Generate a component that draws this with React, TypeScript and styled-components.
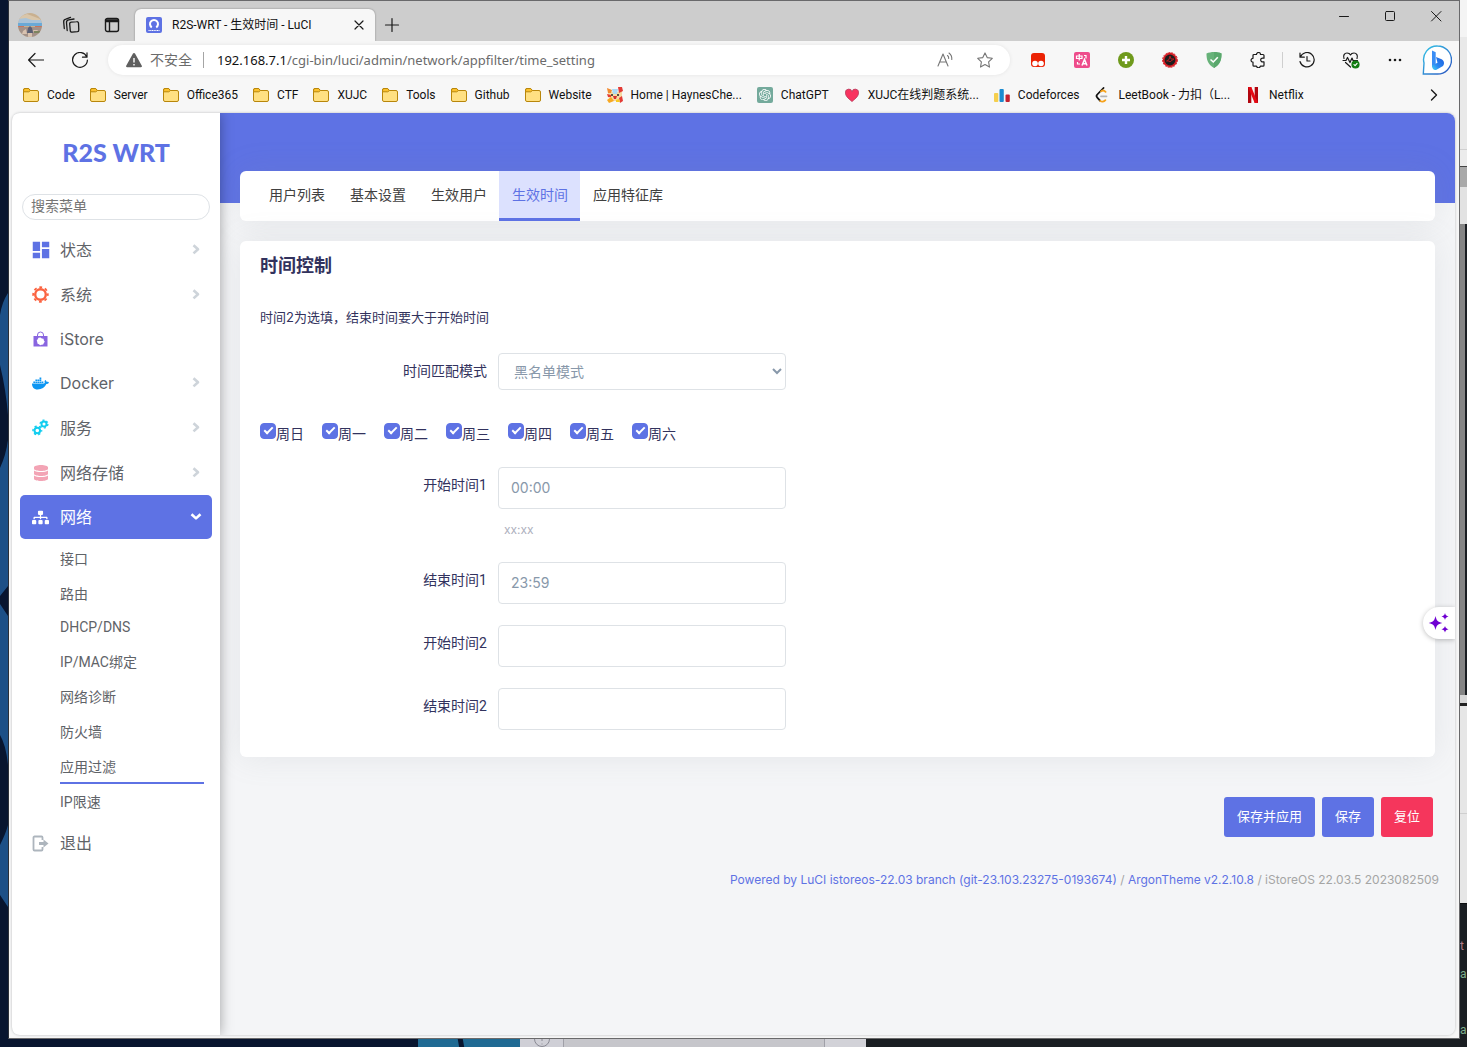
import React, { useState } from "react";
import styled, { createGlobalStyle, css } from "styled-components";
import { FaDatabase, FaDocker, FaSitemap } from "react-icons/fa";
import { MdDashboard } from "react-icons/md";
import { SiOpenai } from "react-icons/si";

const primary = "#5e72e4";
const uiFont = `"Noto Sans", "Open Sans", "Noto Sans CJK SC", sans-serif`;
const compactFont = `Roboto, "Noto Sans CJK SC", sans-serif`;
const pageFont = `Inter, "Noto Sans CJK SC", sans-serif`;

const GlobalStyle = createGlobalStyle`
  *, *::before, *::after { box-sizing: border-box; }
  body { margin: 0; font-family: ${pageFont}; }
  button { font: inherit; border: 0; background: none; padding: 0; cursor: pointer; }
  a { color: inherit; text-decoration: none; }
  ul { list-style: none; margin: 0; padding: 0; }
`;

/* ---------- desktop behind the window ---------- */

const Desktop = styled.div`
  display: grid;
  grid-template-columns: 8px minmax(0, 1fr) 7px;
  grid-template-rows: minmax(0, 1fr) 8px;
  height: 100vh;
  background: #08152f;
  overflow: hidden;
`;

const Wallpaper = styled.svg`
  width: 8px;
  height: 100%;
`;

const RightEdge = styled.div`
  display: flex;
  flex-direction: column;
  grid-row: 1 / 3;
  grid-column: 3;
  overflow: hidden;
  background: #e6e6e6;
`;

const EdgeBlock = styled.div<{ $h: number; $c: string; $line?: string }>`
  flex: 0 0 ${(p) => p.$h}px;
  background: ${(p) => p.$c};
  border-bottom: ${(p) => (p.$line ? `1px solid ${p.$line}` : "0")};
`;

const Terminal = styled.div`
  flex: 1;
  padding-top: 28px;
  background: #1a1e22;
  font: 12px/28px ${compactFont};
  border-top: 1px solid #0c0e10;
`;

const TermLine = styled.div<{ $c: string }>`
  color: ${(p) => p.$c};
  height: 28px;
`;

const BottomEdge = styled.div`
  grid-row: 2;
  grid-column: 1 / 3;
  display: flex;
  overflow: hidden;
`;

const Strip = styled.div<{ $w?: number; $c: string }>`
  flex: ${(p) => (p.$w ? `0 0 ${p.$w}px` : "1")};
  height: 8px;
  background: ${(p) => p.$c};
  svg { display: block; }
`;

/* ---------- browser window ---------- */

const BrowserWindow = styled.div`
  grid-row: 1;
  grid-column: 2;
  display: flex;
  flex-direction: column;
  min-height: 0;
  background: #f7f7f7;
  border: 1px solid #69696b;
  border-left-color: #2c3038;
`;

const TitleBar = styled.div`
  display: flex;
  height: 40px;
  background: #cdcdcd;
  font-family: ${uiFont};
`;

const TitleLeft = styled.div`
  display: flex;
  align-items: center;
  width: 126px;
  padding: 8px 0 0 8px;
`;

const TitleIcon = styled.button`
  display: grid;
  place-items: center;
  width: 41px;
  height: 32px;
  &:first-child { width: 26px; margin-right: 7px; }
`;

const BrowserTab = styled.div`
  display: flex;
  align-items: center;
  width: 240px;
  margin-top: 8px;
  padding: 0 8px 0 11px;
  border-radius: 6px 6px 0 0;
  background: #f7f7f7;
  box-shadow: 0 0 2px rgba(0, 0, 0, 0.4);
  clip-path: inset(-3px -3px 0 -3px);
  font: 12px/16px ${compactFont};
  color: #111;
  svg { flex: none; }
`;

const TabTitle = styled.span`
  flex: 1;
  margin-left: 10px;
  white-space: nowrap;
`;

const TabButton = styled.button`
  display: grid;
  place-items: center;
  width: 16px;
  height: 32px;
`;

const NewTab = styled(TabButton)`
  width: 34px;
  margin-top: 8px;
`;

const WindowButtons = styled.div`
  display: flex;
  margin-left: auto;
`;

const WindowButton = styled.button`
  display: grid;
  place-items: center;
  width: 46px;
  height: 30px;
`;

const Toolbar = styled.div`
  display: flex;
  align-items: center;
  height: 38px;
  padding: 0 2px 0 5px;
`;

const ToolButton = styled.button<{ $w?: number }>`
  display: grid;
  place-items: center;
  flex: 0 0 ${(p) => p.$w ?? 44}px;
  height: 34px;
`;

const Address = styled.div`
  display: flex;
  align-items: center;
  flex: 1;
  height: 30px;
  margin: 0 6px;
  padding-left: 18px;
  padding-right: 5px;
  border-radius: 15px;
  background: #fff;
  box-shadow: 0 0 4px rgba(0, 0, 0, 0.08);
  color: #6b6b6b;
  font: 13px/20px ${uiFont};
`;

const Insecure = styled.span`
  margin-left: 8px;
  padding-right: 11px;
  font-size: 14px;
  line-height: 16px;
  border-right: 1px solid #a5a5a5;
`;

const Url = styled.span`
  flex: 1;
  margin-left: 13px;
  white-space: nowrap;
  b { font-weight: 400; color: #111; }
`;

const ToolDivider = styled.span`
  width: 1px;
  height: 16px;
  margin: 0 2px;
  background: #cfcfcf;
`;

const Bookmarks = styled.nav`
  display: flex;
  align-items: center;
  height: 34px;
  flex: none;
  padding: 0 17px 2px 14px;
  color: #111;
  font: 12px/16px ${compactFont};
`;

const Bookmark = styled.a`
  display: flex;
  align-items: center;
  gap: 8px;
  margin-right: 15px;
  white-space: nowrap;
  svg { flex: none; }
`;

const MoreBookmarks = styled.button`
  display: grid;
  place-items: center;
  width: 16px;
  height: 24px;
  margin-left: auto;
`;

/* ---------- router page ---------- */

const Viewport = styled.div`
  position: relative;
  display: flex;
  flex: 1;
  min-height: 0;
  margin: 0 4px 3px 3px;
  border-radius: 8px;
  overflow: hidden;
  background: #f4f5f7;
  box-shadow: 0 0 2px 1px #d9dadb;
`;

const Sidebar = styled.aside`
  position: relative;
  flex: 0 0 208px;
  padding: 0 8px;
  background: #fff;
  box-shadow: 0 0 12px rgba(0, 0, 0, 0.35);
`;

const Brand = styled.a`
  display: block;
  padding-top: 21px;
  height: 81px;
  text-align: center;
  color: ${primary};
  font: 900 25px/36px Lato, sans-serif;
`;

const Search = styled.input`
  display: block;
  width: calc(100% - 4px);
  height: 26px;
  margin: 0 2px 7px;
  padding: 0 8px 2px;
  border: 1px solid #dee2e6;
  border-radius: 13px;
  font: 14px/20px ${compactFont};
  outline: 0;
  &::placeholder { color: #757575; }
`;

const MenuLink = styled.a<{ $active?: boolean; $short?: boolean }>`
  display: flex;
  align-items: center;
  height: ${(p) => (p.$short || p.$active ? 44 : 45)}px;
  padding: 0 8px 0 12px;
  border-radius: 5px;
  color: #5f6368;
  font-size: 16px;
  line-height: 24px;
  ${(p) => p.$active && css`background: ${primary}; color: #fff;`}
`;

const MenuIcon = styled.span<{ $c: string }>`
  display: flex;
  align-items: center;
  justify-content: center;
  width: 17px;
  height: 17px;
  margin-right: 11px;
  color: ${(p) => p.$c};
  svg { flex: none; }
`;

const MenuLabel = styled.span`
  flex: 1;
`;

const SubMenu = styled.ul`
  padding: 2px 8px 2px 40px;
`;

const SubLink = styled.a<{ $active?: boolean; $short?: boolean }>`
  display: block;
  height: ${(p) => (p.$short ? 33 : 35)}px;
  border-bottom: 2px solid ${(p) => (p.$active ? primary : "transparent")};
  color: #5f6368;
  font: 14px/36px ${compactFont};
  ${(p) => p.$short && css`line-height: 33px;`}
`;

const Main = styled.main`
  flex: 1;
  min-width: 0;
  padding: 58px 20px 0;
  background: linear-gradient(${primary} 90px, #f4f5f7 90px);
  color: #32325d;
`;

const TabBar = styled.nav`
  display: flex;
  height: 50px;
  padding: 0 16px;
  border-radius: 6px;
  background: #fff;
  box-shadow: 0 0 32px rgba(136, 140, 150, 0.14);
`;

const PageTab = styled.a<{ $active?: boolean }>`
  padding: 0 12px 0 13px;
  border-bottom: 3px solid ${(p) => (p.$active ? primary : "transparent")};
  background: ${(p) => (p.$active ? "#dce1fe" : "none")};
  color: ${(p) => (p.$active ? primary : "#404040")};
  font-size: 14px;
  line-height: 48px;
`;

const Card = styled.section`
  margin-top: 20px;
  padding: 11px 20px 27px;
  border-radius: 6px;
  background: #fff;
  box-shadow: 0 0 32px rgba(136, 140, 150, 0.14);
`;

const CardTitle = styled.h3`
  margin: 0 0 27px;
  font-size: 18px;
  line-height: 28px;
  font-weight: 700;
`;

const Lead = styled.p`
  margin: 0 0 26px;
  font-size: 13px;
  line-height: 20px;
`;

const Row = styled.div`
  display: flex;
  margin-bottom: 21px;
  &:last-child { margin-bottom: 0; }
`;

const RowLabel = styled.label`
  flex: 0 0 227px;
  margin-right: 11px;
  text-align: right;
  font: 14px/36px ${compactFont};
`;

const Field = styled.div`
  width: 288px;
`;

const control = css`
  display: block;
  width: 100%;
  border: 1px solid #dee2e6;
  border-radius: 4px;
  background: #fff;
  color: #8898aa;
  font-family: ${pageFont};
  outline: 0;
`;

const Select = styled.select`
  ${control}
  height: 37px;
  padding: 0 0 1px 11px;
  font-size: 14px;
`;

const TextInput = styled.input`
  ${control}
  height: 42px;
  padding: 0 12px 2px;
  font-size: 14px;
`;

const Hint = styled.div`
  margin-top: 9px;
  padding-left: 6px;
  color: #adb0bd;
  font-size: 12px;
  line-height: 23px;
`;

const Days = styled.div`
  display: flex;
  gap: 18px;
  margin: 32px 0 24px;
`;

const Day = styled.label`
  display: flex;
  font-size: 14px;
  line-height: 20px;
  height: 20px;
  margin-top: 1px;
  span { padding-top: 1px; }
`;

const DayBox = styled.input`
  appearance: none;
  display: grid;
  place-items: center;
  width: 16px;
  height: 16px;
  margin: 0;
  border: 1px solid ${primary};
  border-radius: 4px;
  background: #fff;
  &:checked { background: ${primary}; }
  &:checked::after {
    content: "";
    width: 9px;
    height: 5px;
    margin-bottom: 3px;
    border: solid #fff;
    border-width: 0 0 2px 2px;
    transform: rotate(-45deg);
  }
`;

const Actions = styled.div`
  display: flex;
  justify-content: flex-end;
  gap: 7px;
  padding: 40px 2px 0 0;
`;

const ActionButton = styled.button<{ $danger?: boolean }>`
  height: 40px;
  padding: 0 13px 2px;
  border-radius: 3px;
  background: ${(p) => (p.$danger ? "#f5365c" : primary)};
  color: #fff;
  font-size: 13px;
  line-height: 20px;
`;

const Footer = styled.footer`
  margin: 33px -4px 0 0;
  text-align: right;
  color: #a5a5a5;
  font-size: 12px;
  line-height: 20px;
  a { color: ${primary}; }
`;

const Assistant = styled.button`
  position: absolute;
  right: 0;
  top: 494px;
  display: grid;
  place-items: center;
  width: 32px;
  height: 32px;
  border-radius: 16px 0 0 16px;
  background: #fff;
  box-shadow: 0 1px 5px rgba(0, 0, 0, 0.25);
`;

/* ---------- icons ---------- */

type Kids = { children: React.ReactNode; s?: number; w?: number; c?: string };
const Line = ({ children, s = 16, w = 1.2, c = "#1a1a1a" }: Kids) => (
  <svg width={s} height={s} viewBox={`0 0 ${s} ${s}`} fill="none" stroke={c} strokeWidth={w} strokeLinecap="round" strokeLinejoin="round">
    {children}
  </svg>
);

const Folder = () => (
  <svg width="16" height="16" viewBox="0 0 16 16" stroke="#b8860b" strokeLinejoin="round">
    <path d="M.5 3A1.5 1.5 0 0 1 2 1.500h3.600L7.500 3.500H14A1.500 1.500 0 0 1 15.500 5v8A1.500 1.500 0 0 1 14 14.500H2A1.500 1.500 0 0 1 .5 13z" fill="#ffe082" />
    <path d="M.7 4.800h5L7.500 3.500 5.600 1.500H2A1.500 1.500 0 0 0 .5 3z" fill="#fbc02d" />
  </svg>
);

const Avatar = () => (
  <svg width="24" height="24" viewBox="0 0 24 24">
    <clipPath id="face"><circle cx="12" cy="12" r="12" /></clipPath>
    <g clipPath="url(#face)">
      <path fill="#c9b08f" d="M0 0h24v24H0z" />
      <path fill="#d9c6aa" d="M3 3l6-2 8 3 5 2v2H0V5z" />
      <path fill="#a9c3d8" d="M0 6l8-1 6 2h10v5H0z" />
      <path fill="#6aa9d6" d="M0 10h24v3H0z" />
      <path fill="#c9745c" d="M0 13h6v1H0zM17 13h7v1h-7z" />
      <path fill="#a39188" d="M0 14h24v10H0z" />
      <path fill="#5a5f74" d="M10 15l2-2 2 2 1 5H9z" />
      <path fill="#d8c2b0" d="M5 18l3-2 1 5H4zM15 17h5l-2 3h-2zM10 20h4v4h-4z" />
      <path fill="#7d8560" d="M16 18h6v2h-6z" />
    </g>
  </svg>
);

const OpenWrt = () => (
  <svg width="16" height="16" viewBox="0 0 16 16">
    <rect width="16" height="16" rx="2" fill={primary} />
    <path d="M5.800 10.300a4 4 0 1 1 4.400 0" fill="none" stroke="#fff" strokeWidth="2" />
    <path d="M2.500 13.500h11" stroke="#fff" strokeWidth="1.200" strokeDasharray="1.200 .5" />
  </svg>
);

const Haynes = () => (
  <svg width="16" height="16" viewBox="0 0 16 16">
    <path d="M1 3l4 2h6l4-2v7l-4 4H5l-4-4z" fill="#f6d9a2" />
    <path d="M11 0l4-0 1 4-4 2zM0 7l4 1v2H1zM12 11l3-2 1 5-3 2z" fill="#e33b35" />
    <path d="M0 1l5 2-1 3-3 0z" fill="#f28b30" />
    <path d="M5 2h6l-1 5H6z" fill="#a9d8f4" />
    <path d="M0 13l4-3 3 4-5 2z" fill="#f7a823" />
    <path d="M6 9h4l-1 3H7z" fill="#d32f2f" />
    <circle cx="5" cy="8" r="1" fill="#222" /><circle cx="11" cy="8" r="1" fill="#222" />
    <path d="M9 13l3-1 1 3H9z" fill="#f7c823" />
  </svg>
);

const ChatGpt = () => (
  <svg width="16" height="16" viewBox="0 0 16 16">
    <rect width="16" height="16" rx="2" fill="#74aa9c" />
    <SiOpenai x="2" y="2" size={12} color="#fff" />
  </svg>
);

const Heart = () => (
  <svg width="16" height="16" viewBox="0 0 16 16">
    <path d="M8 14.500C3.500 11 1.500 8.600 1.500 6a3.300 3.300 0 0 1 6.500-1.200A3.300 3.300 0 0 1 14.500 6c0 2.600-2 5-6.500 8.500z" fill="#f8335f" stroke="#b8385a" strokeWidth=".8" />
  </svg>
);

const Codeforces = () => (
  <svg width="16" height="16" viewBox="0 0 16 16">
    <rect y="6" width="4.300" height="9" rx="1" fill="#f5cf4e" />
    <rect x="5.500" y="2" width="4.300" height="13" rx="1" fill="#1b8bd0" />
    <rect x="11.500" y="7.500" width="4.300" height="7.500" rx="1" fill="#c32230" />
  </svg>
);

const LeetCode = () => (
  <svg width="16" height="16" viewBox="0 0 16 16" fill="none" strokeWidth="1.800" strokeLinecap="round">
    <path d="M9.500 1L3.300 7.500a2.300 2.300 0 0 0 0 3.200l2.700 3" stroke="#111" />
    <path d="M7 4.400c1.500-1.300 3.200-1 4.600.5M6.200 13.800c1.500 1.400 3.600 1.200 5.200-.6" stroke="#f6a21b" />
    <path d="M7 9.300h5.500" stroke="#b3b3b3" />
  </svg>
);

const Netflix = () => (
  <svg width="16" height="16" viewBox="0 0 16 16">
    <path fill="#b1060f" d="M3 0h3.300v16H3zM9.700 0H13v16H9.700z" />
    <path fill="#e50914" d="M3 0h3.300L13 16H9.700z" />
  </svg>
);

const Chevron = ({ open = false }: { open?: boolean }) => (
  <svg width="16" height="16" viewBox="0 0 16 16" fill="none" stroke={open ? "#fff" : "#ced4da"} strokeWidth="2.600">
    <path d={open ? "M3.500 5.300L8 9.400l4.500-4.100" : "M5.500 3.200L10 7.300l-4.500 4.100"} strokeLinejoin="round" />
  </svg>
);

const Gear = () => (
  <svg width="17" height="17" viewBox="0 0 17 17" fill="none" stroke="currentColor">
    <circle cx="8.500" cy="8.500" r="5.300" strokeWidth="2.400" />
    <circle cx="8.500" cy="8.500" r="7.300" strokeWidth="1.800" strokeDasharray="2.870 2.863" strokeDashoffset="1.430" />
  </svg>
);

const Gears = () => (
  <svg width="17" height="17" viewBox="0 0 17 17" fill="none" stroke="currentColor">
    <circle cx="5.300" cy="11.500" r="2.800" strokeWidth="2" />
    <circle cx="5.300" cy="11.500" r="4.300" strokeWidth="1.400" strokeDasharray="2.250 2.253" strokeDashoffset="1.120" />
    <circle cx="12" cy="5" r="2.500" strokeWidth="1.900" />
    <circle cx="12" cy="5" r="3.900" strokeWidth="1.300" strokeDasharray="2.040 2.044" />
  </svg>
);

const Bag = () => (
  <svg width="17" height="17" viewBox="0 0 17 17">
    <path d="M5.500 5.500V4a3 3 0 0 1 6 0v1.500" fill="none" stroke="currentColor" />
    <path d="M1.500 5h14v10.500h-14z" fill="currentColor" />
    <path d="M8.500 6.500l1.300 1.100 1.700.1.400 1.700.9 1.400-1 1.300-.6 1.500-1.600.1-1.400.5-1.300-.9-1.500-.7-.1-1.600-.6-1.500 1-1.300.8-1.500z" fill="#fff" />
  </svg>
);

const Exit = () => (
  <svg width="17" height="17" viewBox="0 0 17 17">
    <path d="M10.500 5V2.500a1 1 0 0 0-1-1h-7a1 1 0 0 0-1 1v12a1 1 0 0 0 1 1h7a1 1 0 0 0 1-1V12" fill="none" stroke="currentColor" strokeWidth="1.800" />
    <path d="M7 7h4.500V4.500l5 4-5 4V10H7z" fill="currentColor" />
  </svg>
);

const Bing = () => (
  <svg width="30" height="30" viewBox="0 0 30 30">
    <defs>
      <linearGradient id="ring" x1="0" y1="0" x2="1" y2="1"><stop stopColor="#35c7e8" /><stop offset="1" stopColor="#2b52c0" /></linearGradient>
      <linearGradient id="bee" x1="0" y1="1" x2="1" y2="0"><stop stopColor="#45d5f5" /><stop offset=".4" stopColor="#2c86f0" /><stop offset="1" stopColor="#1b5fe0" /></linearGradient>
    </defs>
    <path d="M15.500 1a13.600 13.600 0 1 1 0 28H1.300L2 18a13.600 13.600 0 0 1 13.500-17z" fill="#fff" stroke="url(#ring)" strokeWidth="1.400" />
    <path d="M10 5.500l3.700 1.800v13L10 22z" fill="#3a8df5" />
    <path d="M10 20.500l5.500-2.700-1.500-5.800 5 2c3 1.200 4 4.500 2 7l-6.500 3.800c-2.300 1-4.500-.8-4.500-4.300z" fill="url(#bee)" />
  </svg>
);

const Sparkles = () => (
  <svg width="22" height="22" viewBox="0 0 22 22" fill="#6f00d2">
    <path d="M7.500 4c1 4.600 2 5.700 6.800 7-4.800 1.300-5.800 2.400-6.800 7-1-4.600-2-5.700-6.800-7C5.500 9.700 6.500 8.600 7.500 4z" />
    <path d="M17 1c.6 2.200 1.200 2.800 3.600 3.500C18.200 5.200 17.600 5.800 17 8c-.6-2.200-1.200-2.800-3.600-3.500C15.800 3.800 16.400 3.200 17 1zM17 14c.6 2 1.200 2.500 3.600 3.200-2.400.7-3 1.200-3.600 3.200-.6-2-1.200-2.500-3.600-3.200 2.400-.7 3-1.200 3.600-3.200z" />
  </svg>
);

/* ---------- data ---------- */

const bookmarks: [string, React.ReactNode][] = [
  ["Code", <Folder />], ["Server", <Folder />], ["Office365", <Folder />], ["CTF", <Folder />],
  ["XUJC", <Folder />], ["Tools", <Folder />], ["Github", <Folder />], ["Website", <Folder />],
  ["Home | HaynesChe...", <Haynes />], ["ChatGPT", <ChatGpt />], ["XUJC在线判题系统...", <Heart />],
  ["Codeforces", <Codeforces />], ["LeetBook - 力扣（L...", <LeetCode />], ["Netflix", <Netflix />],
];

const menu = [
  { label: "状态", color: primary, icon: <MdDashboard size={22} /> },
  { label: "系统", color: "#fb6340", icon: <Gear /> },
  { label: "iStore", color: "#8965e0", icon: <Bag />, short: true, leaf: true },
  { label: "Docker", color: "#0d96f2", icon: <FaDocker size={17} />, short: true },
  { label: "服务", color: "#11cdef", icon: <Gears /> },
  { label: "网络存储", color: "#f3a4b5", icon: <FaDatabase size={16} /> },
];

const subMenu = ["接口", "路由", "DHCP/DNS", "IP/MAC绑定", "网络诊断", "防火墙", "应用过滤", "IP限速"];
const pageTabs = ["用户列表", "基本设置", "生效用户", "生效时间", "应用特征库"];
const dayNames = ["周日", "周一", "周二", "周三", "周四", "周五", "周六"];
const times = [
  { id: "start1", label: "开始时间1", value: "00:00", hint: "xx:xx" },
  { id: "end1", label: "结束时间1", value: "23:59" },
  { id: "start2", label: "开始时间2", value: "" },
  { id: "end2", label: "结束时间2", value: "" },
];

/* ---------- parts ---------- */

const Chrome = () => (
  <>
    <TitleBar>
      <TitleLeft>
        <TitleIcon aria-label="Profile"><Avatar /></TitleIcon>
        <TitleIcon aria-label="Workspaces">
          <Line s={18} w={1.3}>
            <path d="M9.200 6.200l5.500-.6a1.600 1.600 0 0 1 1.800 1.400l.3 7a1.600 1.600 0 0 1-1.400 1.700l-5.300.5a1.600 1.600 0 0 1-1.800-1.400l-.6-6.800a1.600 1.600 0 0 1 1.500-1.800z" />
            <path d="M5.200 14.500l-.7-7.700a2.600 2.600 0 0 1 2.200-2.900l5.300-.9M2.300 12.500l-.6-6.400a2.600 2.600 0 0 1 2.200-2.900L8.500 1.300" />
          </Line>
        </TitleIcon>
        <TitleIcon aria-label="Tab actions">
          <Line w={1.4}><rect x="1.500" y="1.500" width="13" height="13" rx="2" /><path d="M1.500 3h13M2 4.500h12.500M5.500 5v9" strokeWidth="1.400" /></Line>
        </TitleIcon>
      </TitleLeft>
      <BrowserTab>
        <OpenWrt />
        <TabTitle>R2S-WRT - 生效时间 - LuCI</TabTitle>
        <TabButton aria-label="Close tab"><Line><path d="M4 4l8 8M12 4l-8 8" /></Line></TabButton>
      </BrowserTab>
      <NewTab aria-label="New tab"><Line><path d="M8 1.500v13M1.500 8h13" /></Line></NewTab>
      <WindowButtons>
        <WindowButton aria-label="Minimize"><Line w={1}><path d="M3.500 8.500h9" /></Line></WindowButton>
        <WindowButton aria-label="Maximize"><Line w={1}><rect x="3.500" y="3.500" width="9" height="9" rx="1" /></Line></WindowButton>
        <WindowButton aria-label="Close"><Line w={1}><path d="M3.500 3.500l9.500 9.500M13 3.500L3.500 13" /></Line></WindowButton>
      </WindowButtons>
    </TitleBar>
    <Toolbar>
      <ToolButton aria-label="Back"><Line><path d="M15.500 8H.8M7 1.500L.6 8 7 14.500" /></Line></ToolButton>
      <ToolButton aria-label="Reload"><Line><path d="M14.800 5A7.400 7.400 0 1 0 15.400 8M15 .8V5.200h-4.500" /></Line></ToolButton>
      <Address>
        <svg width="16" height="16" viewBox="0 0 16 16"><path d="M7 1.600a1.100 1.100 0 0 1 2 0l6.800 12.200a1 1 0 0 1-.9 1.500H1.100a1 1 0 0 1-.9-1.500z" fill="#5f5f5f" /><path d="M8 6v4.500M8 12v1.600" stroke="#fff" strokeWidth="1.400" /></svg>
        <Insecure>不安全</Insecure>
        <Url><b>192.168.7.1</b>/cgi-bin/luci/admin/network/appfilter/time_setting</Url>
        <ToolButton $w={40} aria-label="Read aloud">
          <Line c="#767676" w={1.1}><path d="M1 14L6 2l5 12M2.800 10h6.500M10.500 3.500c1 .8 1.300 2 1.200 3M12 1c2 1.500 3 4 2.800 6.500" /></Line>
        </ToolButton>
        <ToolButton $w={40} aria-label="Favorite">
          <Line c="#767676" w={1.1}><path d="M8 .9l2.200 4.700 5.100.7-3.700 3.600.9 5.200L8 12.600l-4.500 2.500.9-5.200L.7 6.300l5.100-.7z" /></Line>
        </ToolButton>
      </Address>
      <ToolButton aria-label="Tampermonkey">
        <svg width="14" height="14" viewBox="0 0 14 14"><rect width="14" height="14" rx="3" fill="#eb2204" /><circle cx="4" cy="10.500" r="2.800" fill="#fff" /><circle cx="10" cy="10.500" r="2.800" fill="#fff" /></svg>
      </ToolButton>
      <ToolButton aria-label="Translate">
        <svg width="16" height="16" viewBox="0 0 16 16"><rect width="16" height="16" rx="2" fill="#ee4c8b" /><path d="M2.500 4h5.500v2.500H2.500zM5.250 2v6.500M10 3.500h2v3M3.500 10v2h2.500" fill="none" stroke="#fff" strokeWidth="1.200" /><path d="M8 13.500l2.500-6 2.500 6M8.800 11.700h3.500" fill="none" stroke="#fff" strokeWidth="1.500" /></svg>
      </ToolButton>
      <ToolButton aria-label="Add">
        <svg width="16" height="16" viewBox="0 0 16 16"><circle cx="8" cy="8" r="8" fill="#6f9a1c" /><path d="M8 4v8M4 8h8" stroke="#fff" strokeWidth="2.400" /></svg>
      </ToolButton>
      <ToolButton aria-label="Recorder">
        <svg width="16" height="16" viewBox="0 0 16 16"><circle cx="8" cy="8" r="7.200" fill="#d61f26" /><circle cx="8" cy="8" r="7.400" fill="none" stroke="#d61f26" strokeDasharray="2 1" /><circle cx="8" cy="8" r="5.400" fill="#1d1d1d" /><path d="M8 4l1 3h3l-3 2-1 1-1-1H4.500L7 7.500z" fill="none" stroke="#b5191f" /></svg>
      </ToolButton>
      <ToolButton aria-label="AdGuard">
        <svg width="16" height="16" viewBox="0 0 16 16"><path d="M8 0c2.500 0 5.500.5 7.500 1.500 0 6-1 10.500-7.500 14.500C1.500 12 .5 7.500.5 1.500 2.500.5 5.500 0 8 0z" fill="#67b279" /><path d="M8 0c2.500 0 5.500.5 7.500 1.500 0 6-1 10.500-7.500 14.500z" fill="#5aa86d" /><path d="M4.500 7.500L7.300 10l4.500-4.700" fill="none" stroke="#fff" strokeWidth="1.600" /></svg>
      </ToolButton>
      <ToolButton aria-label="Extensions">
        <Line><path d="M4 2.500h2.500a2 2 0 1 1 4 0H13a1 1 0 0 1 1 1v2.700h-1a1.900 1.900 0 1 0 0 3.700h1v3.300a1 1 0 0 1-1 1h-2.600a2 2 0 0 1-3.900 0H4a1 1 0 0 1-1-1v-3a1.900 1.900 0 1 1 0-3.900V3.500a1 1 0 0 1 1-1z" /></Line>
      </ToolButton>
      <ToolDivider />
      <ToolButton aria-label="History">
        <Line><path d="M1.300 5A7.200 7.200 0 1 1 1 9.500M1 1v4.200h4.300M8 4.500V9h3" /></Line>
      </ToolButton>
      <ToolButton aria-label="Browser essentials">
        <Line s={18}><path d="M2 7.500C.8 4.500 2.500 2 5 2c1.800 0 3 .9 3.500 2 .5-1.100 1.700-2 3.500-2 2.500 0 4.200 2.500 3 5.500M1 9.500h3l1.500-3 2.500 5 2-4.500 1 2.500h4.500M3.500 11.500l5 4.500" /><circle cx="13.500" cy="13.500" r="3.500" fill="#107c10" stroke="#107c10" /><path d="M12 13.600l1.100 1 2-2.200" stroke="#fff" /></Line>
      </ToolButton>
      <ToolButton aria-label="Settings and more">
        <svg width="16" height="16" viewBox="0 0 16 16" fill="#1a1a1a"><circle cx="3" cy="8" r="1.300" /><circle cx="8" cy="8" r="1.300" /><circle cx="13" cy="8" r="1.300" /></svg>
      </ToolButton>
      <ToolButton $w={40} aria-label="Bing"><Bing /></ToolButton>
    </Toolbar>
    <Bookmarks>
      {bookmarks.map(([label, icon]) => (
        <Bookmark href="#" key={label}>{icon}{label}</Bookmark>
      ))}
      <MoreBookmarks aria-label="More bookmarks"><Line w={1.4}><path d="M5.500 3l5 5-5 5" /></Line></MoreBookmarks>
    </Bookmarks>
  </>
);

const Navigation = () => (
  <Sidebar>
    <Brand href="#">R2S WRT</Brand>
    <Search aria-label="搜索菜单" placeholder="搜索菜单" />
    <ul>
      {menu.map((m) => (
        <li key={m.label}>
          <MenuLink href="#" $short={m.short}>
            <MenuIcon $c={m.color}>{m.icon}</MenuIcon>
            <MenuLabel>{m.label}</MenuLabel>
            {!m.leaf && <Chevron />}
          </MenuLink>
        </li>
      ))}
      <li>
        <MenuLink href="#" $active>
          <MenuIcon $c="#fff"><FaSitemap size={17} /></MenuIcon>
          <MenuLabel>网络</MenuLabel>
          <Chevron open />
        </MenuLink>
        <SubMenu>
          {subMenu.map((s) => (
            <li key={s}><SubLink href="#" $active={s === "应用过滤"} $short={s === "DHCP/DNS"}>{s}</SubLink></li>
          ))}
        </SubMenu>
      </li>
      <li>
        <MenuLink href="#" $short>
          <MenuIcon $c="#adb5bd"><Exit /></MenuIcon>
          <MenuLabel>退出</MenuLabel>
        </MenuLink>
      </li>
    </ul>
  </Sidebar>
);

const TimeForm = () => {
  const [days, setDays] = useState(dayNames.map(() => true));
  return (
    <Card>
      <CardTitle>时间控制</CardTitle>
      <Lead>时间2为选填，结束时间要大于开始时间</Lead>
      <Row>
        <RowLabel htmlFor="mode">时间匹配模式</RowLabel>
        <Field>
          <Select id="mode"><option>黑名单模式</option><option>白名单模式</option></Select>
        </Field>
      </Row>
      <Days>
        {dayNames.map((d, i) => (
          <Day key={d}>
            <DayBox type="checkbox" checked={days[i]} onChange={() => setDays(days.map((v, j) => (j === i ? !v : v)))} />
            <span>{d}</span>
          </Day>
        ))}
      </Days>
      {times.map((t) => (
        <Row key={t.id}>
          <RowLabel htmlFor={t.id}>{t.label}</RowLabel>
          <Field>
            <TextInput id={t.id} defaultValue={t.value} />
            {t.hint && <Hint>{t.hint}</Hint>}
          </Field>
        </Row>
      ))}
    </Card>
  );
};

export default function App() {
  return (
    <>
      <GlobalStyle />
      <Desktop>
        <Wallpaper viewBox="0 0 8 1039" preserveAspectRatio="none">
          <path d="M0 0h8v1039H0z" fill="#08152f" />
          <path d="M8 293Q2 302 0 315v50q6 25 8 50zM8 440q-2 15-8 28v128l8-10zM8 616l-8-12v131q6 10 8 30zM8 825q-2 8-8 20v50l8 12z" fill="#1d5087" />
        </Wallpaper>
        <BrowserWindow>
          <Chrome />
          <Viewport>
            <Navigation />
            <Main>
              <TabBar>
                {pageTabs.map((t) => <PageTab href="#" key={t} $active={t === "生效时间"}>{t}</PageTab>)}
              </TabBar>
              <TimeForm />
              <Actions>
                <ActionButton>保存并应用</ActionButton>
                <ActionButton>保存</ActionButton>
                <ActionButton $danger>复位</ActionButton>
              </Actions>
              <Footer>
                <a href="#">Powered by LuCI istoreos-22.03 branch (git-23.103.23275-0193674)</a> / <a href="#">ArgonTheme v2.2.10.8</a> / iStoreOS 22.03.5 2023082509
              </Footer>
            </Main>
            <Assistant aria-label="Assistant"><Sparkles /></Assistant>
          </Viewport>
        </BrowserWindow>
        <RightEdge>
          <EdgeBlock $h={37} $c="#f4f4f4" />
          <EdgeBlock $h={113} $c="#e9e9e9" $line="#d0d0d0" />
          <EdgeBlock $h={17} $c="#ececec" $line="#444" />
          <EdgeBlock $h={20} $c="#a9a9a9" />
          <EdgeBlock $h={37} $c="#e2e2e2" />
          <EdgeBlock $h={471} $c="linear-gradient(90deg, #858585 5px, #1a1e22 5px)" />
          <EdgeBlock $h={8} $c="#d6d6d6" />
          <EdgeBlock $h={3} $c="#222" />
          <EdgeBlock $h={108} $c="#e6e6e6" $line="#cfcfcf" />
          <EdgeBlock $h={89} $c="#e6e6e6" />
          <Terminal>
            <TermLine $c="#b07a86">t</TermLine>
            <TermLine $c="#7fae8b">a</TermLine>
            <TermLine $c="#7fae8b" />
            <TermLine $c="#7fae8b">a</TermLine>
          </Terminal>
        </RightEdge>
        <BottomEdge>
          <Strip $w={418} $c="#08152f" />
          <Strip $w={102} $c="linear-gradient(80deg, #1f6a93 40px, #08152f 41px, #08152f 45px, #1f6a93 46px)" />
          <Strip $w={43} $c="#cfcfd6">
            <svg width="43" height="8" viewBox="0 0 43 8" fill="none" stroke="#8a8a94"><circle cx="22" cy="0" r="7.500" /><path d="M22 4.500v1M22 0v2" /></svg>
          </Strip>
          <Strip $w={1} $c="#a0a0a8" />
          <Strip $w={260} $c="#c6c6cb" />
          <Strip $w={1} $c="#a0a0a8" />
          <Strip $w={41} $c="#d2d2d8" />
          <Strip $c="#1a1e22" />
        </BottomEdge>
      </Desktop>
    </>
  );
}
